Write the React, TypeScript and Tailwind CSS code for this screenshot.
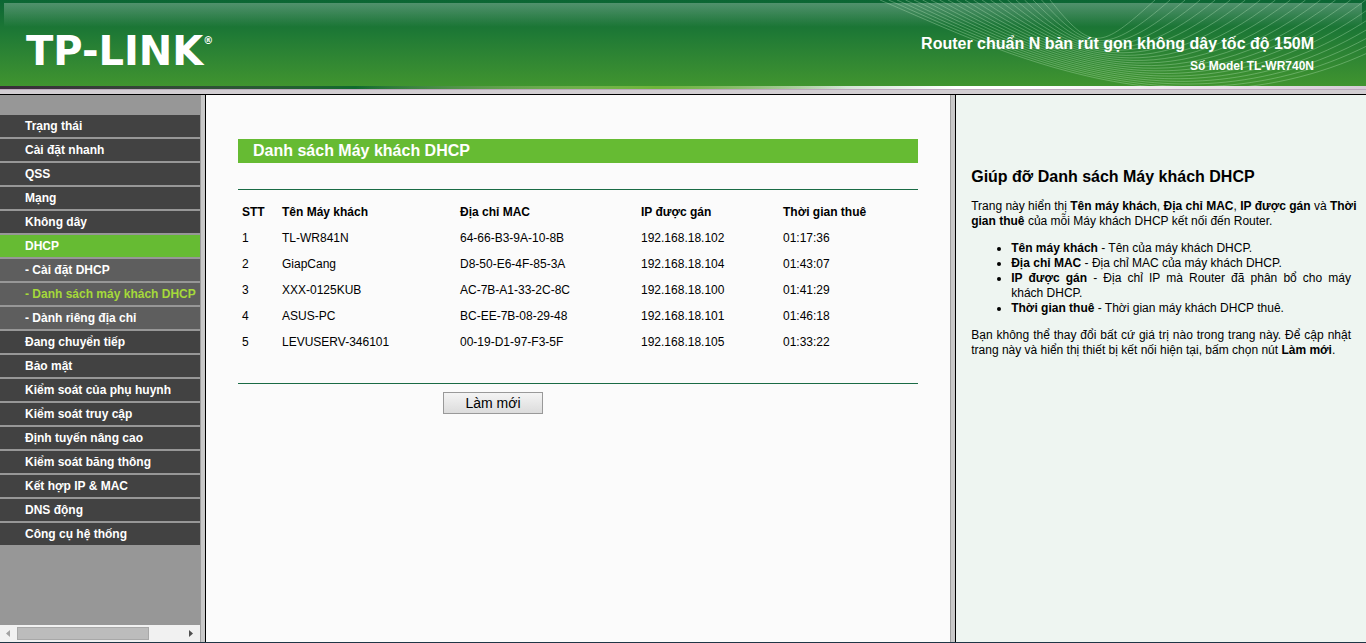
import clsx from "clsx";

interface MenuItem {
  label: string;
  sub?: boolean;
  active?: boolean;
}

interface Client {
  id: number;
  name: string;
  mac: string;
  ip: string;
  lease: string;
}

const menu: MenuItem[] = [
  { label: "Trạng thái" },
  { label: "Cài đặt nhanh" },
  { label: "QSS" },
  { label: "Mạng" },
  { label: "Không dây" },
  { label: "DHCP", active: true },
  { label: "- Cài đặt DHCP", sub: true },
  { label: "- Danh sách máy khách DHCP", sub: true, active: true },
  { label: "- Dành riêng địa chỉ", sub: true },
  { label: "Đang chuyển tiếp" },
  { label: "Bảo mật" },
  { label: "Kiểm soát của phụ huynh" },
  { label: "Kiểm soát truy cập" },
  { label: "Định tuyến nâng cao" },
  { label: "Kiểm soát băng thông" },
  { label: "Kết hợp IP & MAC" },
  { label: "DNS động" },
  { label: "Công cụ hệ thống" },
];

const clients: Client[] = [
  { id: 1, name: "TL-WR841N", mac: "64-66-B3-9A-10-8B", ip: "192.168.18.102", lease: "01:17:36" },
  { id: 2, name: "GiapCang", mac: "D8-50-E6-4F-85-3A", ip: "192.168.18.104", lease: "01:43:07" },
  { id: 3, name: "XXX-0125KUB", mac: "AC-7B-A1-33-2C-8C", ip: "192.168.18.100", lease: "01:41:29" },
  { id: 4, name: "ASUS-PC", mac: "BC-EE-7B-08-29-48", ip: "192.168.18.101", lease: "01:46:18" },
  { id: 5, name: "LEVUSERV-346101", mac: "00-19-D1-97-F3-5F", ip: "192.168.18.105", lease: "01:33:22" },
];

// every line is a blend between the inner and the outer curve
const waves = Array.from({ length: 21 }, (_, i) => {
  const mix = (a: number, b: number) => a + ((b - a) * i) / 20;
  return `M${mix(184, 14)} 0C${mix(226, 144)} ${mix(52, 55)} ${mix(234, 364)} ${mix(50, 170)} ${mix(289, 590)} 0`;
});

function Header() {
  return (
    <header className="shrink-0">
      <div className="relative flex h-[86px] items-center justify-between overflow-hidden bg-linear-to-b from-[#0b6634] via-[#1f7a35] via-40% to-[#40942f] pr-[52px] pl-[26px]">
        <div className="absolute top-[3px] right-1 left-1 h-6 bg-linear-to-b from-white/28 to-white/0"></div>
        <svg
          className="absolute top-0 right-0"
          width="500"
          height="86"
          viewBox="0 0 500 86"
          fill="none"
          stroke="#c8f0c8"
          strokeOpacity="0.32"
          aria-hidden="true"
        >
          {waves.map((d) => (
            <path key={d} d={d} />
          ))}
        </svg>

        <div className="relative flex items-start pt-4 font-['DejaVu_Sans'] font-bold text-white">
          <span className="text-[40px] leading-10">TP-LINK</span>
          <span className="pt-1 text-[10px] leading-3">®</span>
        </div>

        <div className="relative pt-[22px] text-right font-bold text-white">
          <h1 className="text-base leading-6">
            Router chuẩn N bản rút gọn không dây tốc độ 150M
          </h1>
          <p className="text-xs leading-5">Số Model TL-WR740N</p>
        </div>
      </div>

      <div className="h-[3px] bg-linear-to-r from-[#3a2c3a] via-[#0f6a2e] via-26% to-white to-70%">
        <div className="h-full bg-linear-to-r from-transparent from-26% via-[#6fb53a] via-48% to-transparent to-62%">
          <div className="ml-auto h-full w-1/4 bg-linear-to-r from-transparent to-[#d6cbd6]"></div>
        </div>
      </div>
      <div className="h-[5px] border-t border-[#bdaabd] bg-[#d2ced2]"></div>
    </header>
  );
}

function Divider() {
  return (
    <div className="w-1.5 shrink-0 border-r border-l border-r-black border-l-[#9c9c9c] bg-[#c8c8c8]"></div>
  );
}

function Sidebar() {
  return (
    <nav className="flex w-[200px] shrink-0 flex-col bg-[#979797]">
      <ul className="flex-1 pt-5">
        {menu.map((item) => (
          <li key={item.label} className="border-b-2 border-[#979797]">
            <a
              href="#"
              className={clsx(
                "block pl-[25px] text-xs leading-[22px] font-bold whitespace-nowrap",
                item.sub ? "bg-[#5e5e5e]" : item.active ? "bg-[#66bb33]" : "bg-[#424242]",
                item.sub && item.active ? "text-[#a5d93a]" : "text-white"
              )}
            >
              {item.label}
            </a>
          </li>
        ))}
      </ul>

      <div className="flex h-[17px] items-center bg-[#f1f1f1]">
        <svg width="17" height="17" viewBox="0 0 17 17" aria-hidden="true">
          <path d="M10 5v7L6 8.500z" fill="#a3a3a3" />
        </svg>
        <div className="h-[13px] w-[132px] border border-[#a8a8a8] bg-[#bcbcbc]"></div>
        <svg className="ml-auto" width="17" height="17" viewBox="0 0 17 17" aria-hidden="true">
          <path d="M6 5v7l4-3.500z" fill="#505050" />
        </svg>
      </div>
    </nav>
  );
}

function ClientList() {
  return (
    <main className="flex-1 bg-[#fbfbfb] px-8 pt-11">
      <h2 className="bg-[#66bb33] pl-[15px] text-base leading-6 font-bold text-white">
        Danh sách Máy khách DHCP
      </h2>

      <div className="mt-[26px] border-y border-[#1a6b45] pt-[9px] pb-7">
        <table className="w-full table-fixed text-left text-xs">
          <thead>
            <tr className="h-[26px]">
              <th className="w-10 pl-1">STT</th>
              <th className="w-[178px] pl-1">Tên Máy khách</th>
              <th className="w-[181px] pl-1">Địa chỉ MAC</th>
              <th className="w-[142px] pl-1">IP được gán</th>
              <th className="pl-1">Thời gian thuê</th>
            </tr>
          </thead>
          <tbody>
            {clients.map((client) => (
              <tr key={client.id} className="h-[26px]">
                <td className="pl-1">{client.id}</td>
                <td className="pl-1">{client.name}</td>
                <td className="pl-1">{client.mac}</td>
                <td className="pl-1">{client.ip}</td>
                <td className="pl-1">{client.lease}</td>
              </tr>
            ))}
          </tbody>
        </table>
      </div>

      <div className="pt-2 pl-[205px]">
        <button
          type="button"
          className="block h-[22px] w-[100px] border border-[#999] bg-linear-to-b from-[#f4f4f4] to-[#dcdcdc] text-sm leading-5"
        >
          Làm mới
        </button>
      </div>
    </main>
  );
}

function Help() {
  return (
    <aside className="w-[30%] shrink-0 bg-[#eef5f1] px-[15px] pt-[72px] text-justify text-xs leading-[15px]">
      <h2 className="text-left text-base leading-5 font-bold">
        Giúp đỡ Danh sách Máy khách DHCP
      </h2>
      <p className="mt-3 whitespace-nowrap">
        Trang này hiển thị <b>Tên máy khách</b>, <b>Địa chỉ MAC</b>, <b>IP được gán</b> và{" "}
        <b>
          Thời
          <br />
          gian thuê
        </b>{" "}
        của mỗi Máy khách DHCP kết nối đến Router.
      </p>
      <ul className="my-3 list-disc pl-10">
        <li>
          <b>Tên máy khách</b> - Tên của máy khách DHCP.
        </li>
        <li>
          <b>Địa chỉ MAC</b> - Địa chỉ MAC của máy khách DHCP.
        </li>
        <li>
          <b>IP được gán</b> - Địa chỉ IP mà Router đã phân bổ cho máy khách&nbsp;DHCP.
        </li>
        <li>
          <b>Thời gian thuê</b> - Thời gian máy khách DHCP thuê.
        </li>
      </ul>
      <p>
        Bạn không thể thay đổi bất cứ giá trị nào trong trang này. Để cập nhật trang này và hiển
        thị thiết bị kết nối hiện tại, bấm chọn nút <b>Làm mới</b>.
      </p>
    </aside>
  );
}

export default function App() {
  return (
    <div className="flex min-h-screen flex-col border-b border-[#1f3545] font-['Liberation_Sans',Arial,sans-serif] text-black">
      <Header />
      <div className="flex flex-1 border-t border-black">
        <Sidebar />
        <Divider />
        <ClientList />
        <Divider />
        <Help />
      </div>
    </div>
  );
}
